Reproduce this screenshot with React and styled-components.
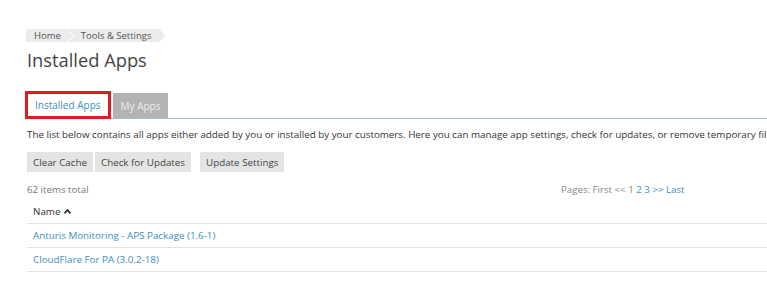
import React from "react";
import styled, { createGlobalStyle } from "styled-components";

const GlobalStyle = createGlobalStyle`
    html, body {
        margin: 0;
        padding: 0;
        background: #ffffff;
        overflow: hidden;
    }
    body {
        font-family: "Open Sans", "Liberation Sans", sans-serif;
        font-size: 10px;
        color: #333333;
    }
`;

const Page = styled.div`
    padding: 29px 0 0 27px;
    width: 1000px;
`;

const Breadcrumbs = styled.div`
    display: flex;
    height: 13px;
    margin-left: -1px;
`;

const Crumb = styled.span`
    display: flex;
    align-items: center;
    height: 13px;
    padding: 0 ${props => (props.$first ? "12px" : "14px")} 0
        ${props => (props.$first ? "8px" : "13px")};
    margin-left: ${props => (props.$first ? "0" : "-5px")};
    background: #ececec;
    color: #555555;
    font-size: 9.5px;
    clip-path: ${props =>
        props.$first
            ? "polygon(0 0, calc(100% - 6px) 0, 100% 50%, calc(100% - 6px) 100%, 0 100%)"
            : "polygon(0 0, calc(100% - 6px) 0, 100% 50%, calc(100% - 6px) 100%, 0 100%, 6px 50%)"};
`;

const Title = styled.h1`
    margin: 6px 0 0;
    font-size: 18.3px;
    font-weight: 400;
    line-height: 24px;
    color: #444444;
`;

const Tabs = styled.div`
    display: flex;
    align-items: flex-end;
    margin-top: 18px;
    height: 28px;
    border-bottom: 1px solid #a9bfcb;
    width: 740px;
`;

const Tab = styled.div`
    display: flex;
    align-items: center;
    box-sizing: border-box;
    height: ${props => (props.$active ? "28px" : "25px")};
    margin-bottom: ${props => (props.$active ? "-1px" : "0")};
    padding: 0 ${props => (props.$active ? "7px" : "8px")};
    margin-left: ${props => (props.$active ? "-2px" : "2px")};
    background: ${props => (props.$active ? "#ffffff" : "#b3b3b3")};
    border: ${props => (props.$active ? "3px solid #e11b22" : "none")};
    color: ${props => (props.$active ? "#3d8fc4" : "#ececec")};
    font-size: 10px;
`;

const Description = styled.p`
    margin: 8px 0 0;
    line-height: 16px;
    white-space: nowrap;
    font-size: 9.8px;
    color: #333333;
`;

const Toolbar = styled.div`
    display: flex;
    margin-top: 9px;
    gap: 2px;
`;

const Button = styled.div`
    display: flex;
    align-items: center;
    height: 20px;
    padding: 0 6px;
    margin-left: ${props => (props.$spaced ? "7px" : "0")};
    background: #e4e4e4;
    color: #444444;
    font-size: 9.8px;
`;

const ListInfo = styled.div`
    display: grid;
    grid-template-columns: 534px auto;
    margin-top: 10px;
    line-height: 16px;
    color: #777777;
    font-size: 9.7px;
`;

const Pager = styled.div`
    color: #888888;
`;

const PageLink = styled.span`
    color: #3d8fc4;
`;

const Table = styled.div`
    width: 740px;
    margin-top: 2px;
`;

const Row = styled.div`
    display: flex;
    align-items: center;
    gap: 4px;
    height: 23px;
    padding-left: 6px;
    border-bottom: 1px solid #e3e3e3;
    color: ${props => (props.$head ? "#333333" : "#3d8fc4")};
    font-size: 9.8px;
`;

const SortArrow = () => (
    <svg width="7" height="5" viewBox="0 0 7 5">
        <path d="M0.5 4.3 L3.5 1 L6.5 4.3" fill="none" stroke="#333" strokeWidth="1.8" />
    </svg>
);

export default function App() {
    return (
        <Page>
            <GlobalStyle />
            <Breadcrumbs>
                <Crumb $first>Home</Crumb>
                <Crumb>Tools &amp; Settings</Crumb>
            </Breadcrumbs>
            <Title>Installed Apps</Title>
            <Tabs>
                <Tab $active>Installed Apps</Tab>
                <Tab>My Apps</Tab>
            </Tabs>
            <Description>
                The list below contains all apps either added by you or installed by your
                customers. Here you can manage app settings, check for updates, or remove
                temporary files.
            </Description>
            <Toolbar>
                <Button>Clear Cache</Button>
                <Button>Check for Updates</Button>
                <Button $spaced>Update Settings</Button>
            </Toolbar>
            <ListInfo>
                <span>62 items total</span>
                <Pager>
                    Pages: First &lt;&lt; 1 <PageLink>2</PageLink>{" "}
                    <PageLink>3</PageLink> <PageLink>&gt;&gt;</PageLink>{" "}
                    <PageLink>Last</PageLink>
                </Pager>
            </ListInfo>
            <Table>
                <Row $head>
                    Name <SortArrow />
                </Row>
                <Row>Anturis Monitoring - APS Package (1.6-1)</Row>
                <Row>CloudFlare For PA (3.0.2-18)</Row>
            </Table>
        </Page>
    );
}
